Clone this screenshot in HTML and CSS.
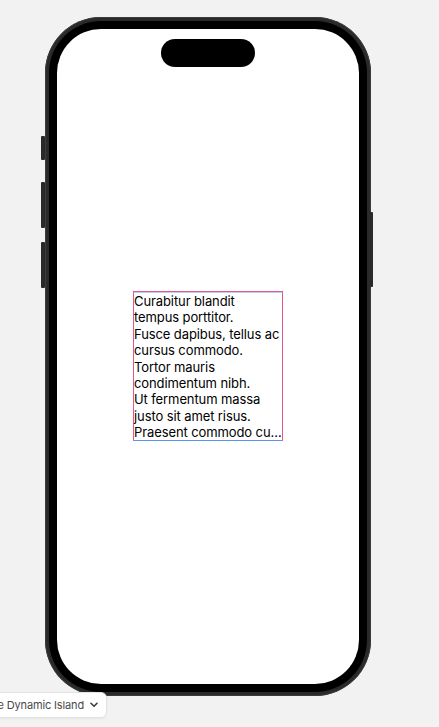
FILE: index.html
```html
<!DOCTYPE html>
<html lang="en">
<head>
<meta charset="utf-8">
<title>Preview</title>
<link rel="stylesheet" href="styles.css">
</head>
<body>
<div class="stage">
  <div class="phone">
    <span class="btn btn-action"></span>
    <span class="btn btn-vol-up"></span>
    <span class="btn btn-vol-down"></span>
    <span class="btn btn-power"></span>
    <div class="bezel">
      <div class="screen">
        <div class="island"></div>
        <div class="content">
          <div class="textbox">
            <div class="line">Curabitur blandit tempus porttitor.</div>
            <div class="line">Fusce dapibus, tellus ac cursus commodo.</div>
            <div class="line">Tortor mauris condimentum nibh.</div>
            <div class="line">Ut fermentum massa justo sit amet risus.</div>
            <div class="line last">Praesent commodo cursus magna, vel scelerisque nisl consectetur et.</div>
          </div>
        </div>
      </div>
    </div>
  </div>
  <div class="toolbar">
    <div class="pill">
      <span class="pill-label">Hide Dynamic Island</span>
      <svg class="chev" width="8" height="6" viewBox="0 0 8 6"><path d="M1 1.3 L4 4.3 L7 1.3" fill="none" stroke="#3c3c3c" stroke-width="1.6" stroke-linecap="round" stroke-linejoin="round"/></svg>
    </div>
  </div>
</div>
</body>
</html>
```

FILE: styles.css
```css
html, body {
  margin: 0;
  padding: 0;
  background: #f2f2f2;
  width: 439px;
  height: 727px;
  overflow: hidden;
  font-family: Inter, "Noto Sans", "Liberation Sans", sans-serif;
}

.stage {
  position: relative;
  width: 439px;
  height: 727px;
  padding: 17px 0 0 45px;
  box-sizing: border-box;
}

.phone {
  position: relative;
  width: 326px;
  height: 679px;
  box-sizing: border-box;
  padding: 4px;
  border-radius: 56px;
  background: #2a2a2a;
  box-shadow: inset 0 0 0 1px #3b3b3b;
}

.btn {
  position: absolute;
  width: 4px;
  background: #2a2a2a;
  border-radius: 1px;
}
.btn-action { left: -4px; top: 119px; height: 24px; }
.btn-vol-up { left: -4px; top: 165px; height: 46px; }
.btn-vol-down { left: -4px; top: 225px; height: 46px; }
.btn-power { left: 325px; top: 195px; height: 75px; width: 3px; border-radius: 0 1px 1px 0; }

.bezel {
  height: 100%;
  box-sizing: border-box;
  padding: 8px;
  background: #000;
  border-radius: 52px;
}

.screen {
  position: relative;
  height: 100%;
  background: #fff;
  border-radius: 44px;
  overflow: hidden;
  display: flex;
  flex-direction: column;
}

.island {
  position: absolute;
  left: 50%;
  top: 10px;
  width: 94px;
  height: 28px;
  margin-left: -47px;
  background: #000;
  border-radius: 14px;
}

.content {
  flex: 1;
  display: flex;
  align-items: center;
  justify-content: center;
  padding: 45px 0 26px;
}

.textbox {
  width: 148px;
  border: 1px solid #e2578c;
  border-bottom-color: #5b93ee;
  box-shadow: inset 0 1px 0 rgba(110, 150, 235, 0.45);
  color: #000;
  font-size: 13px;
  line-height: 16.4px;
  letter-spacing: -0.1px;
  padding-top: 1px;
  height: 147px;
  box-sizing: content-box;
}

.line.last {
  white-space: nowrap;
  overflow: hidden;
  text-overflow: ellipsis;
}

.toolbar {
  position: absolute;
  left: 0;
  top: 692px;
  width: 107px;
  height: 26px;
}

.pill {
  position: absolute;
  right: 0;
  top: 0;
  height: 26px;
  box-sizing: border-box;
  display: flex;
  align-items: center;
  gap: 6px;
  padding: 0 8px 0 10px;
  white-space: nowrap;
  background: #fff;
  border: 1px solid #e3e3e3;
  border-radius: 6px;
  box-shadow: 0 1px 2px rgba(0, 0, 0, 0.05);
}

.pill-label {
  font-size: 11px;
  letter-spacing: -0.15px;
  color: #4a4a4a;
}

.chev {
  display: block;
}
```
